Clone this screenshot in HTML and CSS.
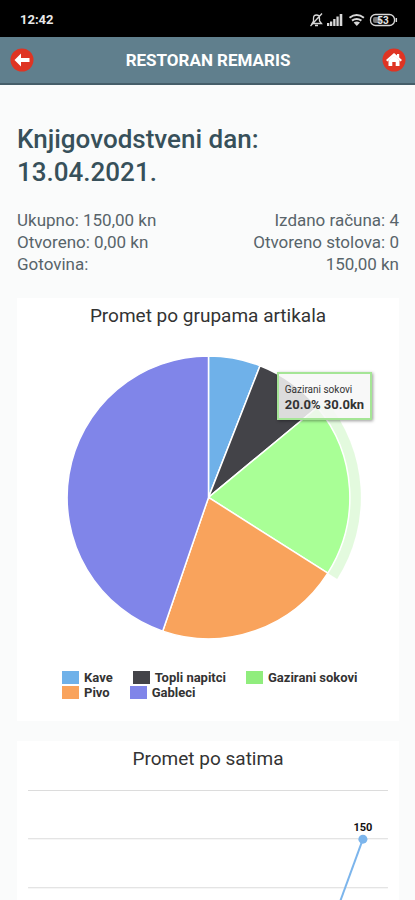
FILE: index.html
```html
<!DOCTYPE html>
<html lang="hr">
<head>
<meta charset="utf-8">
<meta name="viewport" content="width=device-width, initial-scale=1">
<title>Restoran Remaris</title>
<link rel="stylesheet" href="styles.css">
</head>
<body>
<div class="app">
  <div class="status">
    <span class="clock">12:42</span>
    <svg class="status-icons" width="90" height="16" viewBox="0 0 90 16" fill="none" stroke="#d8d8d8" stroke-width="1.3" aria-hidden="true">
      <path d="M3 11.500h9.500l-2-2.500V6.500C10.500 4 9.500 3 7.500 3S4.500 4 4.500 6.500V9zM6 13.500h3M13 1.500L1.500 14"/>
      <path fill="#d8d8d8" stroke="none" d="M18 11h2.300v3H18zM21 9.500h2.300V14H21zM24.200 7h2.300v7h-2.300zM27.400 4.500h2.300V14h-2.300zM30.700 2h2.600v12h-2.600z"/>
      <path stroke-width="2" d="M40.500 5.700q7.200-5.400 14.400 0M43 8.600q4.700-3.400 9.400 0"/>
      <path fill="#d8d8d8" stroke="none" d="M44.600 10.600q3.200-2 6.400 0l-3.200 3.400z"/>
      <rect x="61.500" y="2.500" width="24" height="11" rx="5"/>
      <path stroke-width="1.500" d="M87.300 6v4"/>
      <rect x="64" y="5" width="8" height="6" rx="2" fill="#777" stroke="none"/>
      <text class="battery" x="74" y="12" text-anchor="middle">53</text>
    </svg>
  </div>
  <header class="bar">
    <button class="round" type="button" aria-label="Natrag">
      <svg width="24" height="24" viewBox="0 0 24 24"><circle cx="12" cy="12" r="11.500" fill="#df3423"/><path fill="#fff" d="M4.500 12L11 5.500V10h8.500v4H11v4.500z"/></svg>
    </button>
    <h1 class="bar-title">RESTORAN REMARIS</h1>
    <button class="round" type="button" aria-label="Početna">
      <svg width="24" height="24" viewBox="0 0 24 24"><circle cx="12" cy="12" r="11.500" fill="#df3423"/><path fill="#fff" d="M12 5l3 2.600V6h2.200v3.600l2.800 2.400-1.500 1.500L12 8l-6.500 5.500L4 12z"/><path fill="#fff" d="M12 7.500l5.500 5V18h-3.800v-4h-3.400v4H6.500v-5.500z"/></svg>
    </button>
  </header>
  <main class="content">
    <h2 class="day">Knjigovodstveni dan: 13.04.2021.</h2>
    <div class="totals">
      <div class="row"><span>Ukupno: 150,00 kn</span><span>Izdano računa: 4</span></div>
      <div class="row"><span>Otvoreno: 0,00 kn</span><span>Otvoreno stolova: 0</span></div>
      <div class="row"><span>Gotovina:</span><span>150,00 kn</span></div>
    </div>
    <section class="card">
      <h3 class="card-title">Promet po grupama artikala</h3>
      <div class="pie">
        <svg class="chart" viewBox="1 0 381 300" role="img" aria-label="Promet po grupama artikala">
          <path fill="#90ed7d" fill-opacity=".25" d="M192 148L309.100 51.100A152 152 0 0 1 320.300 229.400z"/>
          <g stroke="#fff" stroke-width="1.500" stroke-linejoin="round">
            <path fill="#6fb1e9" d="M192 148V7A141 141 0 0 1 243.400 16.700z"/>
            <path fill="#434348" d="M192 148L243.400 16.700A141 141 0 0 1 300.600 58.100z"/>
            <path fill="#a9ff96" d="M192 148L300.600 58.100A141 141 0 0 1 311 223.600z"/>
            <path fill="#f9a35c" d="M192 148L311 223.600A141 141 0 0 1 146.300 281.400z"/>
            <path fill="#8085e9" d="M192 148L146.300 281.400A141 141 0 0 1 192 7z"/>
          </g>
        </svg>
        <div class="tip"><span>Gazirani sokovi</span><strong>20.0% 30.0kn</strong></div>
      </div>
      <ul class="legend">
        <li><i class="swatch blue"></i>Kave</li>
        <li><i class="swatch dark"></i>Topli napitci</li>
        <li><i class="swatch green"></i>Gazirani sokovi</li>
        <li><i class="swatch orange"></i>Pivo</li>
        <li><i class="swatch violet"></i>Gableci</li>
      </ul>
    </section>
    <section class="card">
      <h3 class="card-title">Promet po satima</h3>
      <svg class="chart" viewBox="0 0 381 240" role="img" aria-label="Promet po satima">
        <path stroke="#dcdcdc" stroke-width="1" d="M11 14.500h359M11 62.500h359M11 111.500h359M11 159.500h359M11 208.500h359"/>
        <path fill="none" stroke="#7cb5ec" stroke-width="2" d="M345 63L292 208"/>
        <circle cx="345" cy="63" r="4.500" fill="#7cb5ec"/>
        <text class="point" x="345" y="55" text-anchor="middle">150</text>
      </svg>
    </section>
  </main>
</div>
</body>
</html>
```
FILE: styles.css
```css
* { box-sizing: border-box; margin: 0; }

body {
  font-family: Roboto, "Liberation Sans", sans-serif;
  background: #fafbfb;
}

.app {
  display: flex;
  flex-direction: column;
  height: 100vh;
  overflow: hidden;
}

.status {
  display: flex;
  flex: none;
  align-items: center;
  justify-content: space-between;
  height: 37px;
  padding: 2px 16px 0 20px;
  background: #000;
}

.clock { color: #e8e8e8; font-size: 13px; font-weight: 700; }
.battery { fill: #e8e8e8; stroke: none; font-size: 10px; font-weight: 700; }

.bar {
  display: flex;
  flex: none;
  align-items: center;
  justify-content: space-between;
  height: 48px;
  padding: 0 9px 0 10px;
  background: #607f8d;
  border-bottom: 2px solid #455e69;
}

.bar-title { color: #fff; font-size: 17px; font-weight: 700; }

.round {
  width: 24px;
  height: 24px;
  padding: 0;
  border: 0;
  border-radius: 50%;
  background: none;
}

.round svg { display: block; }

.content { flex: 1; min-height: 0; overflow: hidden; padding: 38px 16px 0 17px; }

.day {
  max-width: 280px;
  color: #37505a;
  font-size: 26px;
  font-weight: 500;
  line-height: 33px;
}

.totals { margin: 20px 0 23px; color: #58646a; font-size: 17px; line-height: 22px; }
.row { display: flex; justify-content: space-between; }

.card {
  margin-bottom: 20px;
  padding: 5px 0 21px;
  background: #fff;
}

.card-title {
  color: #333;
  font-size: 19px;
  font-weight: 400;
  line-height: 26px;
  text-align: center;
}

.chart { display: block; width: 100%; margin-top: 4px; }

.pie { position: relative; padding-top: 16px; }

.tip {
  position: absolute;
  top: 43px;
  left: 68%;
  display: flex;
  flex-direction: column;
  padding: 8px 6px 6px;
  border: 2px solid #a5e596;
  background: rgba(247, 247, 247, .85);
  box-shadow: 1px 1px 3px rgba(0, 0, 0, .4);
  color: #333;
  font-size: 10px;
  line-height: 15px;
  white-space: nowrap;
}

.tip strong { font-size: 13px; }

.legend {
  display: flex;
  flex-wrap: wrap;
  column-gap: 20px;
  margin-top: 20px;
  padding: 0 20px 0 45px;
  list-style: none;
  color: #333;
  font-size: 13px;
  font-weight: 700;
  line-height: 15px;
}

.legend li { display: flex; align-items: center; gap: 5px; }
.swatch { width: 17px; height: 13px; }
.blue { background: #6fb1e9; }
.dark { background: #434348; }
.green { background: #90ed7d; }
.orange { background: #f9a35c; }
.violet { background: #8085e9; }

.point { fill: #111; font-size: 11px; font-weight: 700; }
```
